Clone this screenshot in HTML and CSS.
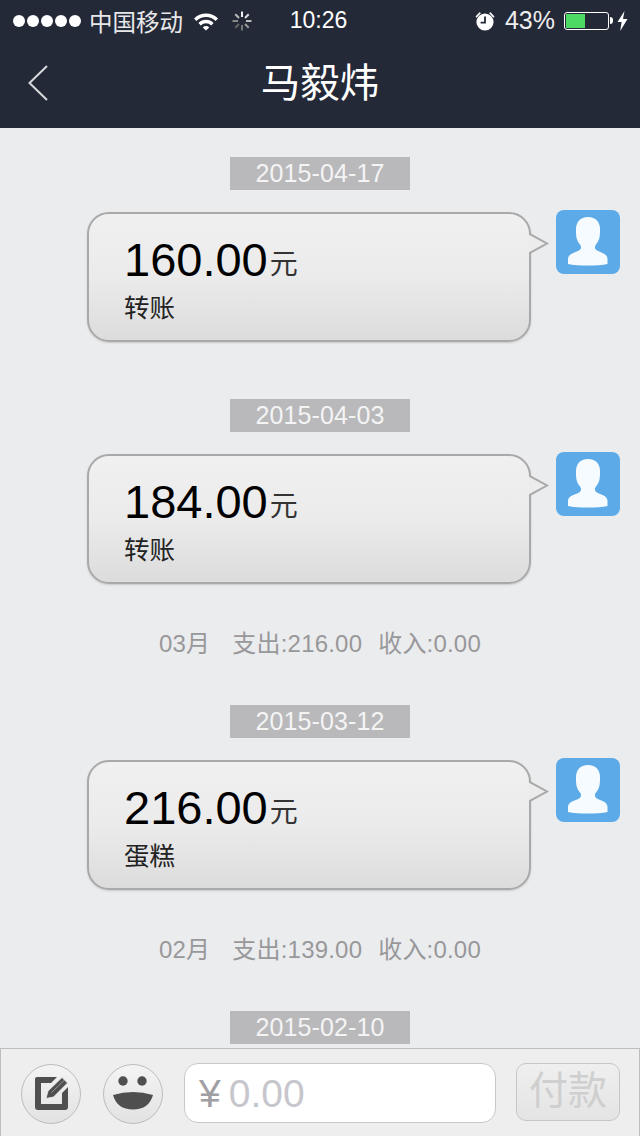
FILE: index.html
```html
<!DOCTYPE html>
<html lang="zh">
<head>
  <meta charset="UTF-8" />
  <meta name="viewport" content="width=device-width, initial-scale=1.0"/>
  <title>马毅炜</title>
  <link rel="stylesheet" href="styles.css">
</head>
<body>
  <div class="page">
    <header class="top">
      <div class="status">
        <div class="status-left">
          <span class="dots"><i></i><i></i><i></i><i></i><i></i></span>
          <span class="carrier">中国移动</span>
          <svg class="wifi" width="26" height="20" viewBox="0 0 26 20">
            <path d="M1 7.5 A17 17 0 0 1 25 7.5 L22.6 10 A13.6 13.6 0 0 0 3.4 10 Z" fill="#fff"/>
            <path d="M5.4 12 A10.8 10.8 0 0 1 20.6 12 L18.2 14.4 A7.4 7.4 0 0 0 7.8 14.4 Z" fill="#fff"/>
            <path d="M9.8 16.4 A4.6 4.6 0 0 1 16.2 16.4 L13 19.6 Z" fill="#fff"/>
          </svg>
          <svg class="spinner" width="20" height="20" viewBox="0 0 20 20" stroke-width="2" stroke-linecap="butt">
            <path d="M10 0.5V6" stroke="#f0f0f0"/>
            <path d="M16.7 3.3L13 7" stroke="#ddd"/>
            <path d="M19.5 10H14" stroke="#bbb"/>
            <path d="M16.7 16.7L13 13" stroke="#999"/>
            <path d="M10 19.5V14" stroke="#777"/>
            <path d="M3.3 16.7L7 13" stroke="#666"/>
            <path d="M0.5 10H6" stroke="#888"/>
            <path d="M3.3 3.3L7 7" stroke="#bbb"/>
          </svg>
        </div>
        <div class="time">10:26</div>
        <div class="status-right">
          <svg class="alarm" width="20" height="20" viewBox="0 0 20 20">
            <circle cx="10" cy="11" r="8.6" fill="#fff"/>
            <path d="M0.5 5.5 L4.5 1.2 L6 2 L1.6 6.8 Z M19.5 5.5 L15.5 1.2 L14 2 L18.4 6.8 Z" fill="#fff"/>
            <path d="M10 5.5V11.6H5.6" fill="none" stroke="#242938" stroke-width="1.8"/>
          </svg>
          <span class="percent">43%</span>
          <span class="battery"><span class="battery-fill"></span></span>
          <span class="battery-tip"></span>
          <svg class="bolt" width="11" height="20" viewBox="0 0 11 20">
            <path d="M7.5 0 L0.5 11 H4.6 L3.2 20 L10.5 8 H6 Z" fill="#fff"/>
          </svg>
        </div>
      </div>
      <nav class="nav">
        <svg class="back" width="22" height="38" viewBox="0 0 22 38">
          <path d="M20 2 L2.5 19 L20 36" fill="none" stroke="#d8d9dc" stroke-width="2"/>
        </svg>
        <h1>马毅炜</h1>
      </nav>
    </header>

    <main class="feed">
      <div class="date">2015-04-17</div>
      <div class="msg">
        <div class="bubble">
          <div class="amount"><b>160.00</b><span>元</span></div>
          <div class="note">转账</div>
          <svg class="tail" width="21" height="26" viewBox="0 0 21 26">
            <path d="M0 2.5 L18 12.5 L0 22.500" fill="#ececed" stroke="#a8a8a8" stroke-width="2"/>
          </svg>
        </div>
        <div class="avatar">
          <svg width="64" height="64" viewBox="0 0 64 64">
            <path d="M32 7 C24 7 20 12.500 20 19 C20 25.500 20 30 24 34.500 C25.500 36.500 25.500 39 23 40.500 C18 43 12 44 12 49 L12 54 C22 56 42 56 51.500 54 L51.500 49 C51.500 44 46 43 41 40.500 C38.500 39 38.500 36.500 40 34.500 C44 30 44 25.500 44 19 C44 12.500 40 7 32 7 Z" fill="#f6fbff"/>
          </svg>
        </div>
      </div>

      <div class="date date-next">2015-04-03</div>
      <div class="msg">
        <div class="bubble">
          <div class="amount"><b>184.00</b><span>元</span></div>
          <div class="note">转账</div>
          <svg class="tail" width="21" height="26" viewBox="0 0 21 26">
            <path d="M0 2.5 L18 12.5 L0 22.500" fill="#ececed" stroke="#a8a8a8" stroke-width="2"/>
          </svg>
        </div>
        <div class="avatar">
          <svg width="64" height="64" viewBox="0 0 64 64">
            <path d="M32 7 C24 7 20 12.500 20 19 C20 25.500 20 30 24 34.500 C25.500 36.500 25.500 39 23 40.500 C18 43 12 44 12 49 L12 54 C22 56 42 56 51.500 54 L51.500 49 C51.500 44 46 43 41 40.500 C38.500 39 38.500 36.500 40 34.500 C44 30 44 25.500 44 19 C44 12.500 40 7 32 7 Z" fill="#f6fbff"/>
          </svg>
        </div>
      </div>

      <div class="summary"><span>03月</span><span>支出:216.00</span><span>收入:0.00</span></div>
      <div class="date">2015-03-12</div>
      <div class="msg">
        <div class="bubble">
          <div class="amount"><b>216.00</b><span>元</span></div>
          <div class="note">蛋糕</div>
          <svg class="tail" width="21" height="26" viewBox="0 0 21 26">
            <path d="M0 2.5 L18 12.5 L0 22.500" fill="#ececed" stroke="#a8a8a8" stroke-width="2"/>
          </svg>
        </div>
        <div class="avatar">
          <svg width="64" height="64" viewBox="0 0 64 64">
            <path d="M32 7 C24 7 20 12.500 20 19 C20 25.500 20 30 24 34.500 C25.500 36.500 25.500 39 23 40.500 C18 43 12 44 12 49 L12 54 C22 56 42 56 51.500 54 L51.500 49 C51.500 44 46 43 41 40.500 C38.500 39 38.500 36.500 40 34.500 C44 30 44 25.500 44 19 C44 12.500 40 7 32 7 Z" fill="#f6fbff"/>
          </svg>
        </div>
      </div>

      <div class="summary"><span>02月</span><span>支出:139.00</span><span>收入:0.00</span></div>
      <div class="date">2015-02-10</div>
    </main>

    <footer class="bar">
      <button class="round" type="button" aria-label="备注">
        <svg width="58" height="58" viewBox="1 1 58 58">
          <path d="M16 13 H36 L30 19 H20 V40 H41 V29 L47 23 V43 Q47 46 44 46 H17 Q14 46 14 43 V15 Q14 13 16 13 Z" fill="#4f4f4f"/>
          <path d="M25 34.500 L27 27 L41 13.500 L46.500 19 L32.500 33 Z" fill="#4f4f4f" stroke="#eeeeee" stroke-width="0.8"/>
          <path d="M30.500 28.500 L43 16.500" stroke="#a8a8a8" stroke-width="0.8"/>
        </svg>
      </button>
      <button class="round round-next" type="button" aria-label="表情">
        <svg width="58" height="58" viewBox="1 1 58 58">
          <circle cx="20" cy="17" r="4.700" fill="#4f4f4f"/>
          <circle cx="39" cy="17" r="4.700" fill="#4f4f4f"/>
          <path d="M10 31 Q30 25 50 31 Q46 45.500 30 45.500 Q14 45.500 10 31 Z" fill="#4f4f4f"/>
        </svg>
      </button>
      <div class="money"><span class="yen">¥</span><span class="zero">0.00</span></div>
      <button class="pay" type="button">付款</button>
    </footer>
  </div>
</body>
</html>
```

FILE: styles.css
```css
:root {
  --dark: #242938;
  --page: #ebecee;
  --tag: #b9b9bb;
  --grey-text: #98989a;
}

* {
  box-sizing: border-box;
}

body {
  margin: 0;
  font-family: "Liberation Sans", "Noto Sans CJK SC", sans-serif;
  background: var(--page);
}

.page {
  display: flex;
  flex-direction: column;
  height: 1136px;
  overflow: hidden;
}

.top {
  flex: none;
  height: 128px;
  background: var(--dark);
  color: #fff;
}

.status {
  display: grid;
  grid-template-columns: 1fr auto 1fr;
  align-items: center;
  height: 40px;
  padding-top: 1px;
}

.status-left,
.status-right {
  display: flex;
  align-items: center;
}

.status-left {
  padding-left: 13px;
}

.dots {
  display: flex;
  gap: 2px;
}

.dots i {
  width: 12px;
  height: 12px;
  border-radius: 50%;
  background: #fff;
}

.carrier {
  margin-left: 8px;
  font-size: 23.5px;
  color: #e8e8ea;
}

.wifi {
  margin-left: 10px;
}

.spinner {
  margin-left: 13px;
}

.time {
  margin-right: 3px;
  font-size: 23px;
}

.status-right {
  justify-content: flex-end;
  padding-right: 12px;
}

.percent {
  margin-left: 10px;
  font-size: 25px;
  color: #eee;
}

.battery {
  width: 45px;
  height: 18px;
  margin-left: 9px;
  padding: 1px;
  border: 1px solid #fff;
  border-radius: 3px;
}

.battery-fill {
  display: block;
  width: 19px;
  height: 100%;
  background: #4cd964;
}

.battery-tip {
  width: 3px;
  height: 7px;
  margin-left: 1px;
  border-radius: 0 3px 3px 0;
  background: #fff;
}

.bolt {
  margin-left: 4px;
}

.nav {
  position: relative;
  height: 88px;
  display: flex;
  align-items: center;
  justify-content: center;
  padding-bottom: 9px;
}

.nav h1 {
  margin: 0;
  font-size: 39.5px;
  font-weight: 400;
  color: #fff;
}

.back {
  position: absolute;
  left: 27px;
  top: 24px;
}

.feed {
  flex: 1;
  min-height: 0;
  padding-top: 29px;
}

.date {
  width: 180px;
  height: 33px;
  margin: 0 auto;
  background: var(--tag);
  color: #f4f4f5;
  font-size: 25px;
  letter-spacing: 0.1px;
  line-height: 33px;
  text-align: center;
}

.date-next {
  margin-top: 57px;
}

.msg {
  display: flex;
  align-items: flex-start;
  margin-top: 20px;
  padding: 0 20px 0 87px;
}

.bubble {
  position: relative;
  width: 444px;
  height: 130px;
  margin-top: 2px;
  margin-right: 25px;
  padding: 14px 0 0 35px;
  border: 2px solid #a9a9a9;
  border-radius: 22px;
  background: linear-gradient(#f0f0f1, #ebebec 50%, #dcdcdc);
  box-shadow: 0 1px 2px rgba(0,0,0,0.15);
}

.amount {
  line-height: 64px;
}

.amount b {
  font-size: 47px;
  font-weight: 400;
  color: #000;
}

.amount span {
  margin-left: 2px;
  font-size: 28px;
  color: #333;
  vertical-align: 2px;
}

.note {
  margin-top: -13px;
  font-size: 25.5px;
  line-height: 36px;
  color: #222;
}

.tail {
  position: absolute;
  left: 440px;
  top: 17px;
}

.avatar {
  flex: none;
  width: 64px;
  height: 64px;
  border-radius: 8px;
  background: #5cabe8;
}

.avatar svg {
  display: block;
}

.summary {
  display: flex;
  justify-content: center;
  gap: 16px;
  height: 121px;
  padding-top: 43px;
  color: var(--grey-text);
  font-size: 24px;
  letter-spacing: 0.2px;
  line-height: 34px;
}

.summary span:first-child {
  margin-right: 6px;
}

.bar {
  flex: none;
  display: flex;
  align-items: flex-start;
  height: 88px;
  padding: 15px 19px 0 20px;
  border: 1px solid #bdbdbd;
  border-bottom: 0;
  background: #eeeeee;
}

.round {
  flex: none;
  display: flex;
  align-items: center;
  justify-content: center;
  width: 60px;
  height: 60px;
  margin: 0;
  padding: 0;
  border: 1px solid #bcbcbc;
  border-radius: 50%;
  background: linear-gradient(#f4f4f4, #e2e2e2);
}

.round-next {
  margin-left: 22px;
}

.money {
  flex: none;
  display: flex;
  align-items: center;
  width: 312px;
  height: 60px;
  margin: -1px 0 0 21px;
  padding: 2px 0 0 14px;
  border: 1px solid #c8c8c8;
  border-radius: 14px;
  background: #fff;
  font-size: 39px;
}

.yen {
  color: #a0a0a4;
}

.zero {
  margin-left: 8px;
  color: #c6c6cc;
}

.pay {
  flex: none;
  width: 104px;
  height: 58px;
  margin: -1px 0 0 20px;
  padding: 0 0 4px;
  border: 1px solid #c6c6c6;
  border-radius: 10px;
  background: linear-gradient(#efefef, #e4e4e4);
  color: #cfcfcf;
  font-family: inherit;
  font-size: 39px;
  line-height: 1;
}
```
